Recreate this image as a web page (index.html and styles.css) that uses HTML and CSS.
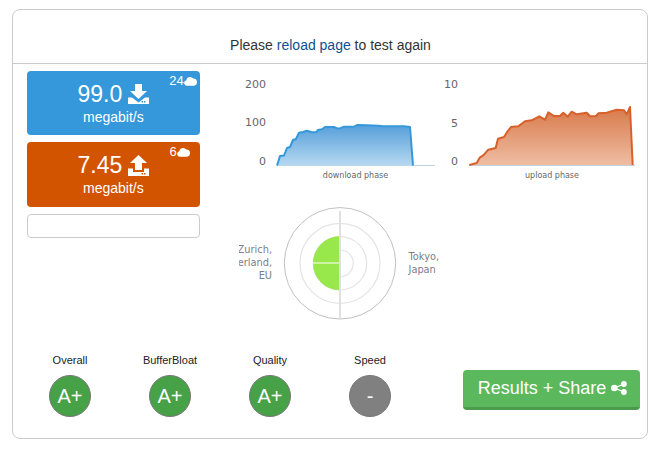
FILE: index.html
```html
<!DOCTYPE html>
<html lang="en">
<head>
<meta charset="utf-8">
<title>Speed test results</title>
<link rel="stylesheet" href="styles.css">
</head>
<body>
<div class="panel">
  <div class="panel-head">Please <a href="#" class="reload">reload page</a> to test again</div>
  <div class="panel-main">
    <div class="stats">
      <div class="tile tile-down">
        <div class="badge">24<svg class="cloud" viewBox="0 0 14 10"><path d="M3 10a3 3 0 0 1-.6-5.900A4.300 4.300 0 0 1 10 2.300 3.900 3.900 0 0 1 11 10z"/></svg></div>
        <div class="tile-value">99.0<svg class="load" viewBox="0 0 21 20"><path d="M7 0h7v7h5l-8.500 8L2 7h5z"/><path d="M0 13.500h4l6.500 5 6.500-5h4V20H0z"/><rect class="dot" x="13.500" y="17" width="1.500" height="1.500"/><rect class="dot" x="16" y="17" width="1.500" height="1.500"/></svg></div>
        <div class="tile-unit">megabit/s</div>
      </div>
      <div class="tile tile-up">
        <div class="badge">6<svg class="cloud" viewBox="0 0 14 10"><path d="M3 10a3 3 0 0 1-.6-5.900A4.300 4.300 0 0 1 10 2.300 3.900 3.900 0 0 1 11 10z"/></svg></div>
        <div class="tile-value">7.45<svg class="load" viewBox="0 0 21 21"><path d="M10.500 0l8.500 8h-5v7H7V8H2z"/><path d="M0 13.500h5V17h11v-3.500h5V21H0z"/><rect class="dot-up" x="13.500" y="18" width="1.500" height="1.500"/><rect class="dot-up" x="16" y="18" width="1.500" height="1.500"/></svg></div>
        <div class="tile-unit">megabit/s</div>
      </div>
      <div class="empty-box"></div>
    </div>
    <div class="graphs">
      <div class="charts">
        <svg class="chart chart-down" viewBox="224 71 213 119">
          <defs>
            <linearGradient id="gd" x1="0" y1="0" x2="0" y2="1"><stop offset="0" stop-color="#569fda"/><stop offset="1" stop-color="#b6d9f1"/></linearGradient>
          </defs>
          <text class="axis" x="266" y="88">200</text>
          <text class="axis" x="266" y="126">100</text>
          <text class="axis" x="266" y="165">0</text>
          <path class="base" d="M277 165.500H435"/>
          <path fill="url(#gd)" d="M277 165.500L280 156 284 155.500 287 148 290 147 293 140 296 139 299 132.700 303 132 307 130.700 312 132.300 316 132.300 318 130 322 129.300 325 127 334 127 338 128.700 341 128 344 126.700 354 126.700 357 125 367 125.300 379 125.700 382 126.300 404 126.300 410 127 413 165.500z"/>
          <path class="line line-down" d="M277 165.500L280 156 284 155.500 287 148 290 147 293 140 296 139 299 132.700 303 132 307 130.700 312 132.300 316 132.300 318 130 322 129.300 325 127 334 127 338 128.700 341 128 344 126.700 354 126.700 357 125 367 125.300 379 125.700 382 126.300 404 126.300 410 127 413 165.500"/>
          <text class="phase" x="355.500" y="178">download phase</text>
        </svg>
        <svg class="chart chart-up" viewBox="437 71 210 119">
          <defs>
            <linearGradient id="gu" x1="0" y1="0" x2="0" y2="1"><stop offset="0" stop-color="#d8794a"/><stop offset="1" stop-color="#efbda3"/></linearGradient>
          </defs>
          <text class="axis" x="458" y="88">10</text>
          <text class="axis" x="458" y="127">5</text>
          <text class="axis" x="458" y="165">0</text>
          <path class="base" d="M469 165.500H635"/>
          <path fill="url(#gu)" d="M469.300 165L476.700 163 480 157.300 483.300 155.300 488.300 149.700 495.700 148 498 138.700 504 137 507.300 131.700 511 127 518.300 126.300 525 121.300 531.700 120.300 539.300 116.300 545 119.700 548.300 112.300 554 116 560 116 563.300 112.700 567.700 116.700 571.700 111.700 576.700 114.300 586.700 112.700 590 116.300 596 116 598.300 113.300 606.700 112.700 616.700 109.700 624 110.300 626.700 114.300 630 107 632.700 165z"/>
          <path class="line line-up" d="M469.300 165L476.700 163 480 157.300 483.300 155.300 488.300 149.700 495.700 148 498 138.700 504 137 507.300 131.700 511 127 518.300 126.300 525 121.300 531.700 120.300 539.300 116.300 545 119.700 548.300 112.300 554 116 560 116 563.300 112.700 567.700 116.700 571.700 111.700 576.700 114.300 586.700 112.700 590 116.300 596 116 598.300 113.300 606.700 112.700 616.700 109.700 624 110.300 626.700 114.300 630 107 632.700 165"/>
          <text class="phase" x="552" y="178">upload phase</text>
        </svg>
      </div>
      <svg class="radar" viewBox="239 190 202 140">
        <circle class="ring-outer" cx="340" cy="263.300" r="55.700"/>
        <circle class="ring" cx="340" cy="263.300" r="40"/>
        <circle class="ring" cx="340" cy="263.300" r="26.700"/>
        <circle class="ring" cx="340" cy="263.300" r="13.300"/>
        <path class="wedge" d="M340 236.300a27 27 0 0 0 0 54z"/>
        <path class="spoke" d="M340 211V318"/>
        <path class="hline" d="M313 263H339"/>
        <text class="place place-l" x="272" y="253">Zurich,</text>
        <text class="place place-l" x="272" y="266">Switzerland,</text>
        <text class="place place-l" x="272" y="279">EU</text>
        <text class="place" x="408.500" y="260">Tokyo,</text>
        <text class="place" x="408.500" y="273">Japan</text>
      </svg>
    </div>
  </div>
  <div class="panel-foot">
    <div class="grade"><div class="grade-name">Overall</div><div class="grade-dot">A+</div></div>
    <div class="grade"><div class="grade-name">BufferBloat</div><div class="grade-dot">A+</div></div>
    <div class="grade"><div class="grade-name">Quality</div><div class="grade-dot">A+</div></div>
    <div class="grade"><div class="grade-name">Speed</div><div class="grade-dot grade-none">-</div></div>
    <a href="#" class="share">Results + Share <svg class="share-icon" viewBox="0 0 16 14"><circle cx="3.300" cy="7" r="3.300"/><circle cx="12.900" cy="3" r="2.900"/><circle cx="12.900" cy="11" r="2.900"/><path class="share-link" d="M12.900 3L3.300 7 12.900 11"/></svg></a>
  </div>
</div>
</body>
</html>
```
FILE: styles.css
```css
* { box-sizing: border-box; }
html, body { margin: 0; padding: 0; background: #fff; }
body { font-family: "Liberation Sans", Arial, sans-serif; color: #333; }
.panel {
  width: 636px;
  height: 430px;
  margin: 9px 0 0 12px;
  border: 1px solid #ccc;
  border-radius: 8px;
  overflow: hidden;
}
.panel-head {
  height: 54px;
  padding: 27px 0 0 1px;
  line-height: 16px;
  font-size: 14px;
  text-align: center;
  color: #333;
  border-bottom: 1px solid #ccc;
}
.reload { color: #0f5090; text-decoration: none; }
.panel-main { display: flex; height: 267px; padding-left: 14px; }
.stats { width: 173px; padding-top: 7px; display: flex; flex-direction: column; gap: 7px; }
.tile {
  position: relative;
  height: 64px;
  border-radius: 4px;
  color: #fff;
  text-align: center;
  padding-top: 9px;
}
.tile-down { background: #3498db; }
.tile-up { background: #d35400; height: 65px; }
.tile-value { font-size: 23px; line-height: 28px; display: flex; justify-content: center; align-items: center; gap: 6px; }
.tile-unit { font-size: 14px; line-height: 18px; }
.load { width: 21px; height: 20px; fill: #fff; }
.tile-up .load { height: 21px; }
.dot { fill: #3498db; }
.dot-up { fill: #d35400; }
.badge {
  position: absolute;
  top: 2px;
  right: 3px;
  display: flex;
  align-items: center;
  font-size: 13px;
  line-height: 16px;
}
.tile-up .badge { right: 10px; }
.cloud { width: 13px; height: 10px; fill: #fff; }
.empty-box { height: 24px; border: 1px solid #ccc; border-radius: 4px; background: #fff; }
.graphs { margin-left: 24px; width: 424px; }
.charts { display: flex; padding-top: 7px; }
.chart { display: block; height: 119px; }
.chart-down { width: 213px; }
.chart-up { width: 210px; }
.axis { font-family: "DejaVu Sans", sans-serif; font-size: 11px; fill: #666; text-anchor: end; }
.phase { font-family: "DejaVu Sans", sans-serif; font-size: 8px; fill: #666; text-anchor: middle; }
.base { stroke: #c0d0e0; stroke-width: 1; fill: none; }
.line { fill: none; stroke-width: 2; stroke-linejoin: round; }
.line-down { stroke: #3498db; }
.line-up { stroke: #d8602a; }
.radar { display: block; width: 202px; height: 140px; margin-left: 15px; }
.ring-outer { fill: none; stroke: #c0c0c0; stroke-width: 1; }
.ring { fill: none; stroke: #e4e4e4; stroke-width: 1.200; }
.wedge { fill: #8fe63c; fill-opacity: .92; }
.spoke { stroke: #e0e0e0; stroke-width: 2; }
.hline { stroke: #fff; stroke-width: 1; }
.place { font-family: "DejaVu Sans", sans-serif; font-size: 9.800px; fill: #78808a; }
.place-l { text-anchor: end; }
.panel-foot { display: flex; align-items: flex-start; padding-left: 7px; }
.grade { width: 100px; text-align: center; padding-top: 22px; }
.grade-name { font-size: 11px; line-height: 14px; color: #222; }
.grade-dot {
  width: 42px;
  height: 42px;
  margin: 8px auto 0;
  border-radius: 50%;
  border: 1px solid #777;
  background: #47a147;
  color: #fff;
  font-size: 20px;
  line-height: 40px;
}
.grade-none { background: #808080; }
.share {
  display: block;
  width: 177px;
  height: 40px;
  margin: 39px 0 0 43px;
  padding-left: 2px;
  background: #5cb85c;
  border-bottom: 3px solid #4c9a4c;
  border-radius: 4px;
  color: #fff;
  font-size: 18px;
  line-height: 36px;
  text-align: center;
  text-decoration: none;
  white-space: nowrap;
}
.share-icon { width: 16px; height: 14px; vertical-align: -1px; fill: #fff; }
.share-link { fill: none; stroke: #fff; stroke-width: 1.300; }
```
